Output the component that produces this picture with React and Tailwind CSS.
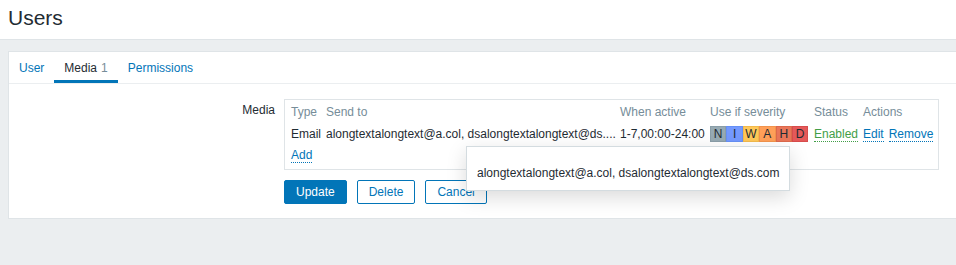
import React from 'react';

const severities = [
  { l: 'N', c: 'bg-[#97aab3] border-[#8a9ea8]' },
  { l: 'I', c: 'bg-[#7499ff] border-[#6690f5]' },
  { l: 'W', c: 'bg-[#ffc859] border-[#f2ba4c]' },
  { l: 'A', c: 'bg-[#ffa059] border-[#f2934c]' },
  { l: 'H', c: 'bg-[#e97659] border-[#dc694c]' },
  { l: 'D', c: 'bg-[#e45959] border-[#d74c4c]' },
];

export default function App() {
  return (
    <div className="relative min-h-[265px] overflow-hidden bg-[#ebeef0] font-['Liberation_Sans',Arial,sans-serif] text-[12px] leading-[14px] text-[#1f2c33]">
      {/* Header */}
      <header className="h-[40px] border-b border-[#dfe4e7] bg-white pl-2 pt-[6px]">
        <h1 className="text-[21px] leading-[24px] text-[#1f2c33]">Users</h1>
      </header>

      {/* Panel */}
      <div className="ml-2 mt-[11px] border border-r-0 border-[#dfe4e7] bg-white">
        {/* Tabs */}
        <div className="flex h-[32px] border-b border-[#ebeef0]">
          <div className="flex h-[31px] items-center px-[10px] text-[#0275b8]">User</div>
          <div className="flex h-[31px] items-center border-b-[3px] border-[#0275b8] px-[10px] pt-[3px]">
            Media<span className="ml-[4px] text-[#768d99]">1</span>
          </div>
          <div className="flex h-[31px] items-center px-[10px] text-[#0275b8]">Permissions</div>
        </div>

        {/* Form */}
        <div className="pb-[14px] pt-[15px]">
          <div className="flex">
            <div className="w-[266px] pt-[4px] text-right">Media</div>
            <div className="ml-[9px] w-[655px] border border-[#dfe4e7] pb-[3px] pl-[6px]">
              <div className="grid h-6 grid-cols-[35px_294px_90px_104px_49px_auto] items-center text-[#768d99]">
                <span>Type</span>
                <span>Send to</span>
                <span>When active</span>
                <span>Use if severity</span>
                <span>Status</span>
                <span>Actions</span>
              </div>
              <div className="grid h-5 grid-cols-[35px_294px_90px_104px_49px_auto] items-center whitespace-nowrap">
                <span>Email</span>
                <span>alongtextalongtext@a.col, dsalongtextalongtext@ds....</span>
                <span>1-7,00:00-24:00</span>
                <span className="flex">
                  {severities.map((s) => (
                    <span
                      key={s.l}
                      className={`flex h-[16px] w-[16.4px] items-center justify-center border ${s.c} text-[12px] leading-none`}
                    >
                      {s.l}
                    </span>
                  ))}
                </span>
                <span>
                  <span className="border-b border-dotted border-[#429e47] text-[#429e47]">Enabled</span>
                </span>
                <span className="flex gap-[5px]">
                  <span className="border-b border-dotted border-[#0275b8] text-[#0275b8]">Edit</span>
                  <span className="border-b border-dotted border-[#0275b8] text-[#0275b8]">Remove</span>
                </span>
              </div>
              <div className="flex h-[22px] items-center">
                <span className="border-b border-dotted border-[#0275b8] text-[#0275b8]">Add</span>
              </div>
            </div>
          </div>

          {/* Buttons */}
          <div className="ml-[275px] mt-[10px] flex gap-[10px]">
            <button className="h-6 rounded-[2px] border border-[#0275b8] bg-[#0275b8] px-[11px] text-white">Update</button>
            <button className="h-6 rounded-[2px] border border-[#0275b8] bg-white px-[11px] text-[#0275b8]">Delete</button>
            <button className="h-6 rounded-[2px] border border-[#0275b8] bg-white px-[11px] text-[#0275b8]">Cancel</button>
          </div>
        </div>
      </div>

      {/* Hintbox */}
      <div className="absolute left-[466px] top-[146px] w-[324px] whitespace-nowrap border border-[#d4dce0] bg-white px-[10px] pb-[10px] pt-[19px] shadow-[0_6px_20px_rgba(0,0,0,0.15)]">
        alongtextalongtext@a.col, dsalongtextalongtext@ds.com
      </div>
    </div>
  );
}
